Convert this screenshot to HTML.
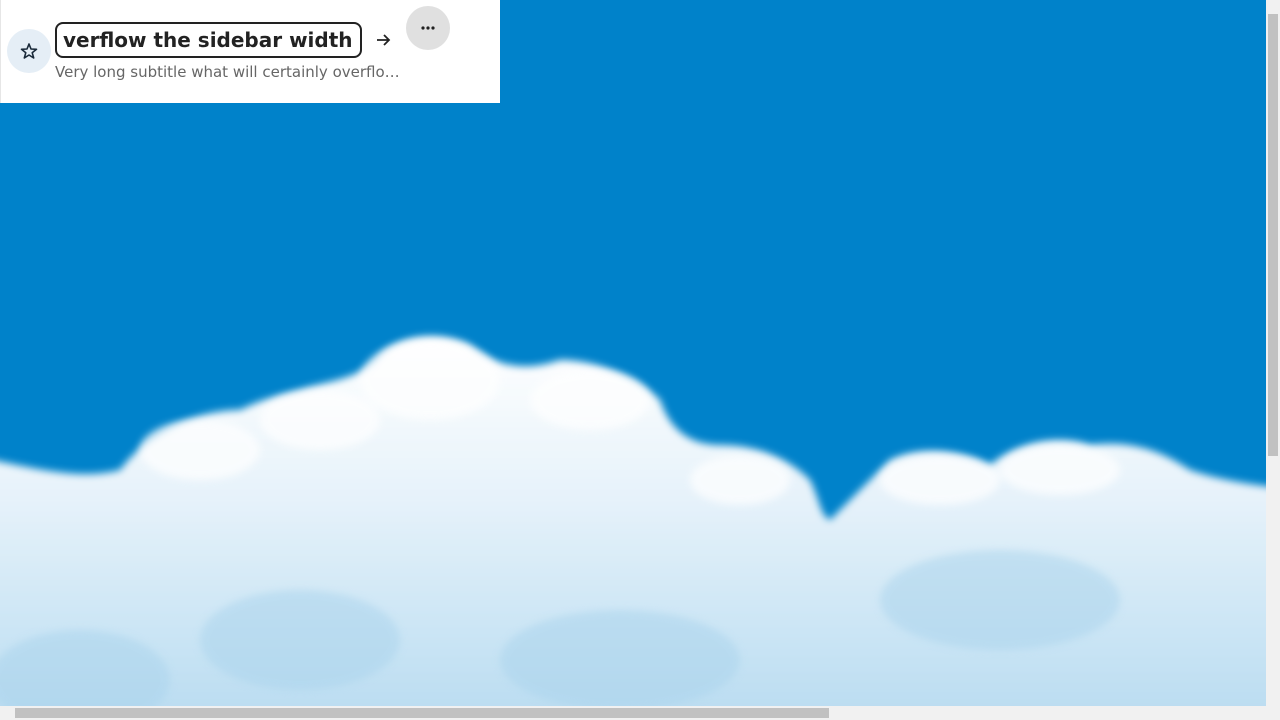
<!DOCTYPE html>
<html><head><style>
html,body{margin:0;padding:0;width:1280px;height:720px;overflow:hidden;font-family:"DejaVu Sans","Liberation Sans",sans-serif}
.bg{position:absolute;left:0;top:0;width:1266px;height:706px;background:#0082ca;overflow:hidden}
.panel{position:absolute;left:0;top:0;width:500px;height:103px;background:#fff;box-shadow:inset 1px 0 0 #e6e6e6}
.star{position:absolute;left:7px;top:29px;width:44px;height:44px;border-radius:50%;background:#e5eef6}
.title{position:absolute;left:55px;top:22px;width:303px;height:32px;border:2px solid #222;border-radius:8px;overflow:hidden;white-space:nowrap;font-weight:bold;font-size:20px;line-height:32px;color:#222}
.title span{position:relative;left:6px}
.sub{position:absolute;left:55px;top:63px;font-size:15px;color:#666;white-space:nowrap}
.arrow{position:absolute;left:373px;top:30px}
.more{position:absolute;left:406px;top:6px;width:44px;height:44px;border-radius:50%;background:#e0e0e0}
.vs{position:absolute;left:1266px;top:0;width:14px;height:720px;background:#f1f1f1}
.vt{position:absolute;left:1268px;top:14px;width:10px;height:442px;background:#c1c1c1}
.hs{position:absolute;left:0;top:706px;width:1266px;height:14px;background:#f1f1f1}
.ht{position:absolute;left:15px;top:708px;width:814px;height:10px;background:#c1c1c1}
</style></head><body>
<div class="bg">
<svg width="1266" height="706" style="position:absolute;left:0;top:0">
<defs>
<filter id="b" x="-20%" y="-20%" width="140%" height="140%"><feGaussianBlur stdDeviation="4"/></filter>
<linearGradient id="g" x1="0" y1="0" x2="0" y2="1"><stop offset="0" stop-color="#ffffff"/><stop offset="0.4" stop-color="#e6f2fa"/><stop offset="1" stop-color="#b5daf0"/></linearGradient>
</defs>
<g filter="url(#b)" fill="url(#g)">
<path d="M-30 455 C40 470 80 480 120 470 C150 430 200 410 240 410 C260 400 280 395 300 390 C330 380 360 380 380 355 C400 335 440 330 470 345 C500 370 530 370 560 360 C600 360 640 380 660 400 C670 430 690 445 720 445 C760 445 790 460 810 480 C820 500 820 515 830 520 C850 500 870 480 890 460 C920 445 960 450 990 465 C1020 440 1060 435 1090 445 C1130 440 1160 450 1190 470 C1220 480 1250 485 1300 490 L1300 740 L-30 740 Z"/>
</g>
<g filter="url(#b)" fill="#ffffff" opacity="0.7">
<ellipse cx="430" cy="380" rx="70" ry="40"/><ellipse cx="320" cy="420" rx="60" ry="30"/>
<ellipse cx="590" cy="400" rx="60" ry="30"/><ellipse cx="940" cy="480" rx="60" ry="25"/>
<ellipse cx="1060" cy="470" rx="60" ry="25"/><ellipse cx="200" cy="450" rx="60" ry="30"/>
<ellipse cx="740" cy="480" rx="50" ry="25"/>
</g>
<g filter="url(#b)" fill="#a9d3ec" opacity="0.5">
<ellipse cx="80" cy="680" rx="90" ry="50"/><ellipse cx="300" cy="640" rx="100" ry="50"/>
<ellipse cx="620" cy="660" rx="120" ry="50"/><ellipse cx="1000" cy="600" rx="120" ry="50"/>
</g>
</svg>
</div>
<div class="panel">
<div class="star"><svg width="44" height="44" viewBox="0 0 44 44"><path d="M22 15 L24 20 L29.5 20.3 L25.2 23.7 L26.7 29 L22 26 L17.3 29 L18.8 23.7 L14.5 20.3 L20 20 Z" fill="none" stroke="#1a2a3a" stroke-width="1.6" stroke-linejoin="round"/></svg></div>
<div class="title"><span>verflow the sidebar width</span></div>
<svg class="arrow" width="20" height="20" viewBox="0 0 20 20"><path d="M4 10 H16 M11 5 L16 10 L11 15" fill="none" stroke="#222" stroke-width="1.8"/></svg>
<div class="more"><svg width="44" height="44"><circle cx="17" cy="22" r="1.6" fill="#222"/><circle cx="22" cy="22" r="1.6" fill="#222"/><circle cx="27" cy="22" r="1.6" fill="#222"/></svg></div>
<div class="sub">Very long subtitle what will certainly overflo…</div>
</div>
<div class="vs"></div><div class="vt"></div>
<div class="hs"></div><div class="ht"></div>
</body></html>
